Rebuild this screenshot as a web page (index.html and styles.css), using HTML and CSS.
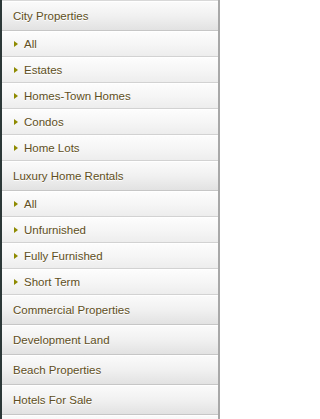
FILE: index.html
```html
<!DOCTYPE html>
<html>
<head>
<meta charset="utf-8">
<link rel="stylesheet" href="styles.css">
</head>
<body>
<nav class="menu">
  <div class="head first">City Properties</div>
  <div class="sub"><span class="tri"></span>All</div>
  <div class="sub"><span class="tri"></span>Estates</div>
  <div class="sub"><span class="tri"></span>Homes-Town Homes</div>
  <div class="sub"><span class="tri"></span>Condos</div>
  <div class="sub"><span class="tri"></span>Home Lots</div>
  <div class="head">Luxury Home Rentals</div>
  <div class="sub"><span class="tri"></span>All</div>
  <div class="sub"><span class="tri"></span>Unfurnished</div>
  <div class="sub"><span class="tri"></span>Fully Furnished</div>
  <div class="sub"><span class="tri"></span>Short Term</div>
  <div class="head">Commercial Properties</div>
  <div class="head">Development Land</div>
  <div class="head">Beach Properties</div>
  <div class="head">Hotels For Sale</div>
  <div class="head"></div>
</nav>
</body>
</html>
```
FILE: styles.css
```css
html, body {
  margin: 0;
  padding: 0;
  background: #ffffff;
}
.menu {
  width: 216px;
  height: 419px;
  overflow: hidden;
  border-left: 2px solid #2c3838;
  border-right: 2px solid #a8a8a8;
  font-family: "Liberation Sans", Arial, sans-serif;
  font-size: 11.5px;
  color: #5f4f22;
  display: flex;
  flex-direction: column;
}
.head {
  flex: none;
  height: 29px;
  display: flex;
  align-items: center;
  padding-left: 11px;
  background: linear-gradient(#fbfbfb, #f1f1f1 50%, #e2e2e2);
  border-bottom: 1px solid #c6c6c6;
  box-shadow: inset 0 1px 0 #ffffff;
  text-shadow: 0 1px 0 #ffffff;
}
.head.first {
  border-top: 1px solid #d8d8d8;
}
.sub {
  flex: none;
  height: 25px;
  display: flex;
  align-items: center;
  padding-left: 12px;
  background: linear-gradient(#fdfdfd, #f6f6f6 50%, #ededed);
  border-bottom: 1px solid #d2d2d2;
  box-shadow: inset 0 1px 0 #ffffff;
  text-shadow: 0 1px 0 #ffffff;
}
.tri {
  width: 0;
  height: 0;
  border-top: 3.5px solid transparent;
  border-bottom: 3.5px solid transparent;
  border-left: 4px solid #8e8a00;
  margin-right: 6px;
}
```
